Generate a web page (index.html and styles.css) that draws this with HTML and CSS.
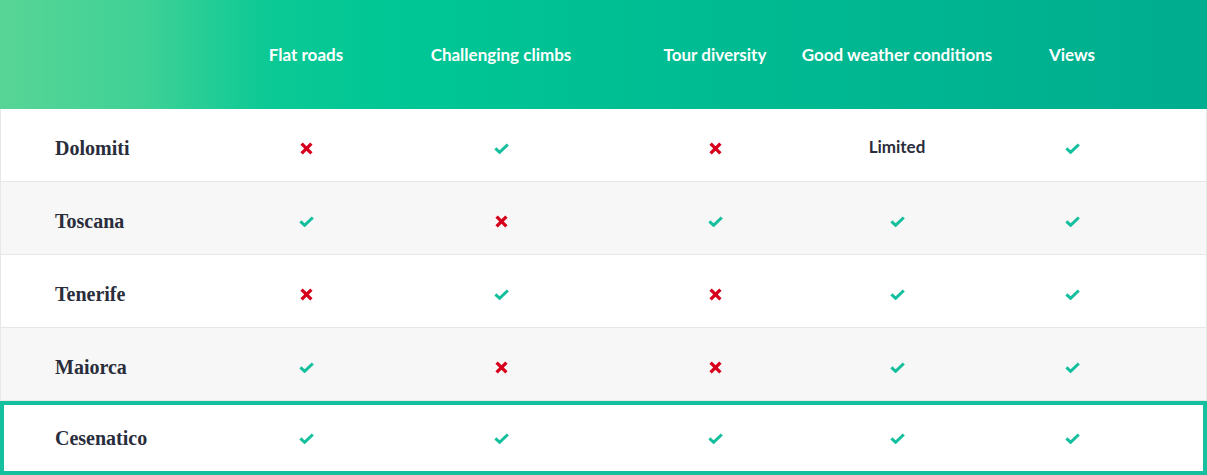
FILE: index.html
```html
<!DOCTYPE html>
<html lang="en">
<head>
<meta charset="utf-8">
<title>Cycling destinations comparison</title>
<link rel="stylesheet" href="styles.css">
</head>
<body>
<svg width="0" height="0" class="defs">
  <defs>
    <symbol id="yes" viewBox="0 0 15 11"><path d="M1.4 5.4 L5.6 9.3 L13.8 1.5" fill="none" stroke="currentColor" stroke-width="3" stroke-linecap="butt" stroke-linejoin="miter"/></symbol>
    <symbol id="no" viewBox="0 0 13 13"><path d="M1.6 1.6 L11.4 11.4 M11.4 1.6 L1.6 11.4" fill="none" stroke="currentColor" stroke-width="3.3" stroke-linecap="butt"/></symbol>
  </defs>
</svg>
<div class="table">
  <div class="row head">
    <div class="cell name"></div>
    <div class="cell">Flat roads</div>
    <div class="cell">Challenging climbs</div>
    <div class="cell">Tour diversity</div>
    <div class="cell">Good weather conditions</div>
    <div class="cell">Views</div>
  </div>
  <div class="row">
    <div class="cell name">Dolomiti</div>
    <div class="cell"><svg class="ic no"><use href="#no"/></svg></div>
    <div class="cell"><svg class="ic yes"><use href="#yes"/></svg></div>
    <div class="cell"><svg class="ic no"><use href="#no"/></svg></div>
    <div class="cell txt">Limited</div>
    <div class="cell"><svg class="ic yes"><use href="#yes"/></svg></div>
  </div>
  <div class="row alt">
    <div class="cell name">Toscana</div>
    <div class="cell"><svg class="ic yes"><use href="#yes"/></svg></div>
    <div class="cell"><svg class="ic no"><use href="#no"/></svg></div>
    <div class="cell"><svg class="ic yes"><use href="#yes"/></svg></div>
    <div class="cell"><svg class="ic yes"><use href="#yes"/></svg></div>
    <div class="cell"><svg class="ic yes"><use href="#yes"/></svg></div>
  </div>
  <div class="row">
    <div class="cell name">Tenerife</div>
    <div class="cell"><svg class="ic no"><use href="#no"/></svg></div>
    <div class="cell"><svg class="ic yes"><use href="#yes"/></svg></div>
    <div class="cell"><svg class="ic no"><use href="#no"/></svg></div>
    <div class="cell"><svg class="ic yes"><use href="#yes"/></svg></div>
    <div class="cell"><svg class="ic yes"><use href="#yes"/></svg></div>
  </div>
  <div class="row alt">
    <div class="cell name">Maiorca</div>
    <div class="cell"><svg class="ic yes"><use href="#yes"/></svg></div>
    <div class="cell"><svg class="ic no"><use href="#no"/></svg></div>
    <div class="cell"><svg class="ic no"><use href="#no"/></svg></div>
    <div class="cell"><svg class="ic yes"><use href="#yes"/></svg></div>
    <div class="cell"><svg class="ic yes"><use href="#yes"/></svg></div>
  </div>
  <div class="row highlight">
    <div class="cell name">Cesenatico</div>
    <div class="cell"><svg class="ic yes"><use href="#yes"/></svg></div>
    <div class="cell"><svg class="ic yes"><use href="#yes"/></svg></div>
    <div class="cell"><svg class="ic yes"><use href="#yes"/></svg></div>
    <div class="cell"><svg class="ic yes"><use href="#yes"/></svg></div>
    <div class="cell"><svg class="ic yes"><use href="#yes"/></svg></div>
  </div>
</div>
</body>
</html>
```

FILE: styles.css
```css
html, body {
  margin: 0;
  padding: 0;
  background: #ffffff;
}

.defs {
  position: absolute;
  width: 0;
  height: 0;
  overflow: hidden;
}

.table {
  width: 1207px;
  font-family: Lato, "Noto Sans", sans-serif;
}

.row {
  display: grid;
  grid-template-columns: 210px 192px 198px 230px 134px 216px 1fr;
  align-items: center;
  box-sizing: border-box;
  height: 73px;
  padding-top: 7px;
  background: #ffffff;
  border-bottom: 1px solid #e7e7e7;
  box-shadow: inset 1px 0 0 #e7e7e7, inset -1px 0 0 #e7e7e7;
}

.row.alt {
  background: #f7f7f7;
}

.row.head {
  height: 109px;
  padding-top: 0;
  border-bottom: none;
  box-shadow: none;
  color: #ffffff;
  font-weight: 700;
  font-size: 17px;
  background: linear-gradient(90deg, #58d596 0%, #3fd196 12%, #0cc995 22%, #00c795 32%, #00bb92 60%, #00ad8f 100%);
}

.row.highlight {
  height: 74px;
  padding-top: 0;
  border-bottom: none;
  box-shadow: inset 0 0 0 4px #14c09e;
}

.cell {
  display: flex;
  justify-content: center;
  align-items: center;
  white-space: nowrap;
}

.cell.name {
  justify-content: flex-start;
  padding-left: 55px;
  font-family: "Liberation Serif", "DejaVu Serif", serif;
  font-weight: 700;
  font-size: 20px;
  color: #2a2d3b;
}

.cell.txt {
  font-weight: 700;
  font-size: 17px;
  color: #2a2d3b;
  margin-top: -4px;
}

.ic {
  display: block;
}

.ic.yes {
  width: 15px;
  height: 11px;
  color: #13bf9c;
}

.ic.no {
  width: 13px;
  height: 13px;
  color: #d6001c;
}
```
